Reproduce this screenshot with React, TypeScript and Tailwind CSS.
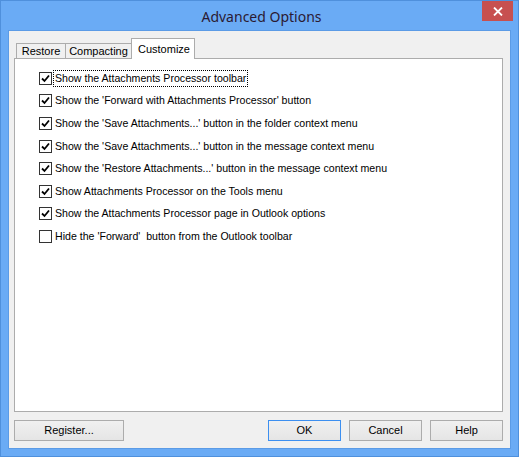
import React, { useState } from 'react';

const OPTIONS = [
  { label: 'Show the Attachments Processor toolbar', checked: true },
  { label: "Show the 'Forward with Attachments Processor' button", checked: true },
  { label: "Show the 'Save Attachments...' button in the folder context menu", checked: true },
  { label: "Show the 'Save Attachments...' button in the message context menu", checked: true },
  { label: "Show the 'Restore Attachments...' button in the message context menu", checked: true },
  { label: 'Show Attachments Processor on the Tools menu', checked: true },
  { label: 'Show the Attachments Processor page in Outlook options', checked: true },
  { label: "Hide the 'Forward'  button from the Outlook toolbar", checked: false },
];

const TABS = [
  { name: 'Restore', width: 'w-[49px]' },
  { name: 'Compacting', width: 'w-[66px]' },
  { name: 'Customize', width: 'w-[64px]' },
];

function CheckBox({ checked }: { checked: boolean }) {
  return (
    <span className="flex h-[13px] w-[13px] shrink-0 items-center justify-center border border-[#333333] bg-white">
      {checked && (
        <svg width="9" height="9" viewBox="0 0 9 9">
          <path d="M1 4.5 L3.5 7 L8 1.5" fill="none" stroke="#000" strokeWidth="1.8" />
        </svg>
      )}
    </span>
  );
}

function DialogButton({ children, focused, width }: { children: React.ReactNode; focused?: boolean; width: string }) {
  return (
    <button
      className={
        'flex h-[21px] items-center justify-center bg-gradient-to-b from-[#f0f0f0] to-[#e5e5e5] text-[11px] text-black ' +
        width +
        (focused ? ' border border-[#3c8ff0]' : ' border border-[#acacac]')
      }
    >
      {children}
    </button>
  );
}

export default function App() {
  const [options, setOptions] = useState(OPTIONS);

  return (
    <div
      className="flex h-[457px] w-[519px] flex-col border border-[#4f90dc] bg-[#6aabf5]"
      style={{ fontFamily: '"Liberation Sans", Arial, sans-serif' }}
    >
      {/* title bar */}
      <div className="flex h-[29px] shrink-0 items-start">
        <div className="flex-1 pl-[40px] pt-[5px] text-center text-[14px] text-[#2a1a33]" style={{ fontFamily: '"Noto Sans", sans-serif' }}>
          Advanced Options
        </div>
        <div className="mr-[5px] flex h-[20px] w-[31px] items-center justify-center bg-[#c75050]">
          <svg width="10" height="9" viewBox="0 0 10 9">
            <path d="M1 0.5 L9 8.5 M9 0.5 L1 8.5" stroke="#fff" strokeWidth="1.8" />
          </svg>
        </div>
      </div>

      {/* client area */}
      <div className="mx-[7px] flex flex-1 flex-col border border-[#5b9be6] bg-[#f0f0f0] pb-[7px] pl-[5px] pr-[7px] pt-[7px]">
        {/* tab strip */}
        <div className="flex h-[20px] items-end pl-[2px]">
          {TABS.map((tab) => {
            const active = tab.name === 'Customize';
            return (
              <div
                key={tab.name}
                className={
                  (active
                    ? 'relative -mb-px h-[21px] items-start border border-b-0 border-[#acacac] bg-white pt-[2px] pl-[6px] '
                    : 'h-[15px] items-center justify-center border border-b-0 border-r-0 border-[#acacac] bg-[#f0f0f0] ') +
                  'flex text-[11px] text-black ' +
                  tab.width
                }
              >
                {tab.name}
              </div>
            );
          })}
        </div>

        {/* tab page */}
        <div className="flex h-[354px] flex-col border border-[#acacac] bg-white pl-[24px] pt-[8px]">
          {options.map((opt, i) => (
            <label
              key={i}
              className="flex h-[22.6px] cursor-default items-center gap-[1px] text-[10.6px] text-black"
              onClick={() =>
                setOptions((prev) => prev.map((o, j) => (j === i ? { ...o, checked: !o.checked } : o)))
              }
            >
              <CheckBox checked={opt.checked} />
              <span
                className={
                  'whitespace-pre px-[1px] leading-[15px] ' +
                  (i === 0 ? 'border border-dotted border-black' : 'border border-transparent')
                }
              >
                {opt.label}
              </span>
            </label>
          ))}
        </div>

        {/* buttons */}
        <div className="mt-[8px] flex items-center">
          <DialogButton width="w-[110px]">Register...</DialogButton>
          <div className="flex-1" />
          <DialogButton width="w-[73px]" focused>
            OK
          </DialogButton>
          <div className="w-[8px]" />
          <DialogButton width="w-[73px]">Cancel</DialogButton>
          <div className="w-[8px]" />
          <DialogButton width="w-[73px]">Help</DialogButton>
        </div>
      </div>
      <div className="h-[7px] shrink-0" />
    </div>
  );
}
